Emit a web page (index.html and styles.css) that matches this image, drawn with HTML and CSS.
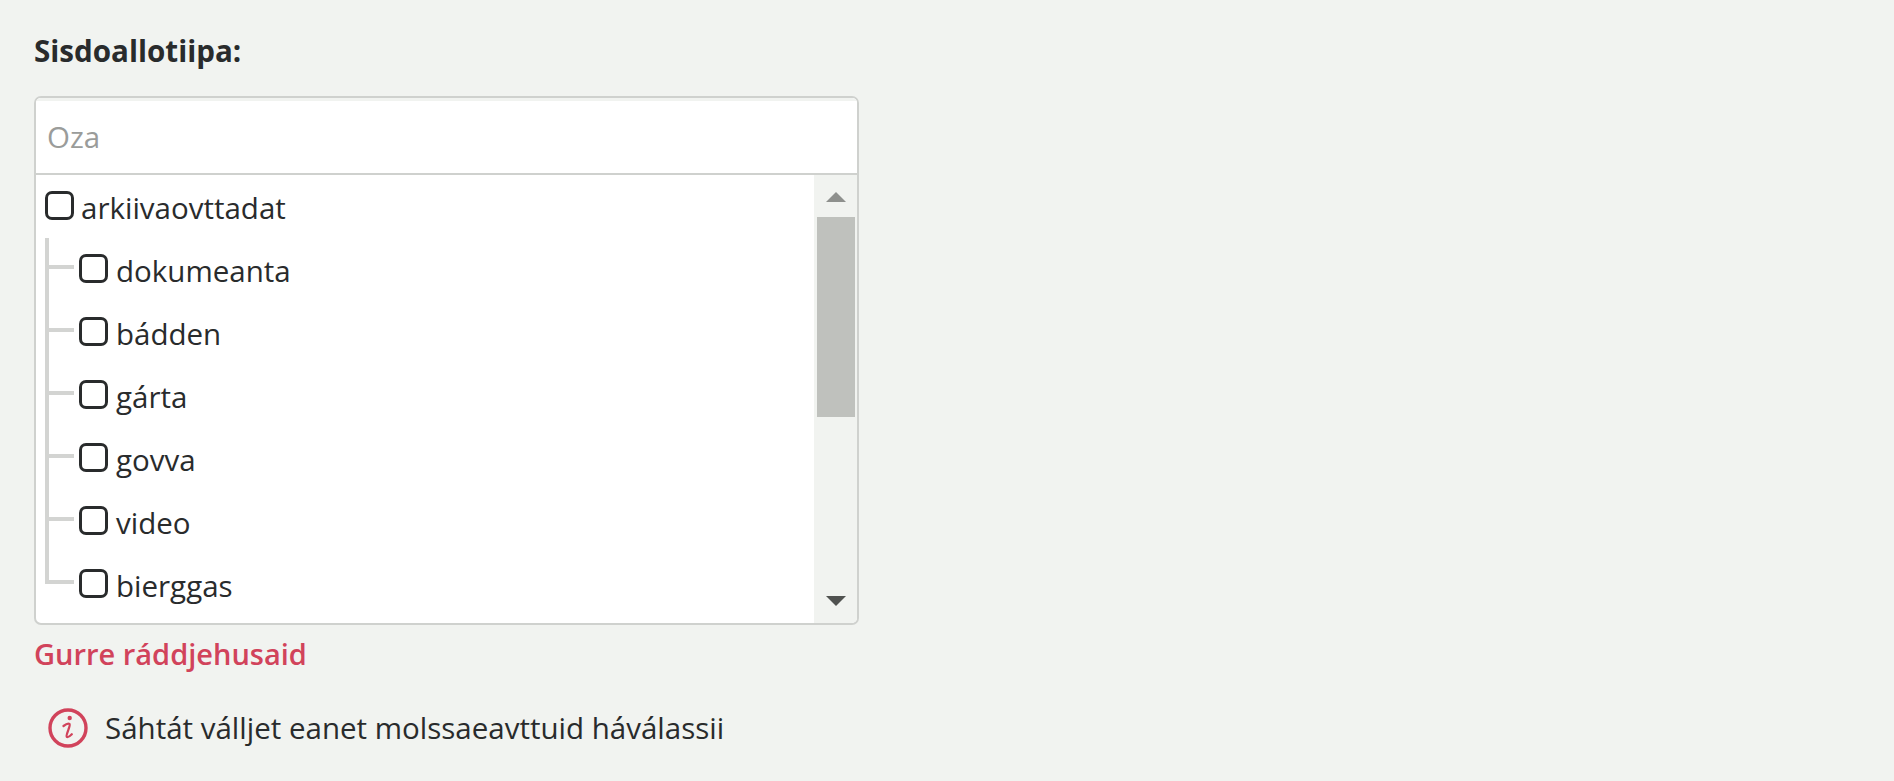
FILE: index.html
```html
<!DOCTYPE html>
<html lang="se">
<head>
<meta charset="utf-8">
<title>Sisdoallotiipa</title>
<link rel="stylesheet" href="styles.css">
</head>
<body>
<section class="field">
  <h2 class="label">Sisdoallotiipa:</h2>
  <div class="box">
    <input class="search" type="text" placeholder="Oza">
    <div class="tree-wrap">
      <div class="tree">
        <label class="node root"><input class="check" type="checkbox"><span>arkiivaovttadat</span></label>
        <ul class="children">
          <li class="child"><i class="stem"></i><label class="node"><input class="check" type="checkbox"><span>dokumeanta</span></label></li>
          <li class="child"><i class="stem"></i><label class="node"><input class="check" type="checkbox"><span>bádden</span></label></li>
          <li class="child"><i class="stem"></i><label class="node"><input class="check" type="checkbox"><span>gárta</span></label></li>
          <li class="child"><i class="stem"></i><label class="node"><input class="check" type="checkbox"><span>govva</span></label></li>
          <li class="child"><i class="stem"></i><label class="node"><input class="check" type="checkbox"><span>video</span></label></li>
          <li class="child"><i class="stem"></i><label class="node"><input class="check" type="checkbox"><span>bierggas</span></label></li>
        </ul>
      </div>
      <div class="scrollbar">
        <i class="arrow up"></i>
        <div class="track"><div class="thumb"></div></div>
        <i class="arrow down"></i>
      </div>
    </div>
  </div>
  <div class="error">Gurre ráddjehusaid</div>
  <div class="hint">
    <svg class="info" viewBox="0 0 40 40" aria-hidden="true">
      <circle cx="20" cy="20" r="18" fill="none" stroke="#d1435b" stroke-width="3.4"/>
      <circle cx="21.700" cy="10" r="2.200" fill="#d1435b"/>
      <path d="M15.500 18c2-1.500 5-2.600 6-2 .8.500.1 2.200-1 5.500-1.100 3.200-2.600 6.500-1.700 7.300.9.700 3-.6 5-2.600" fill="none" stroke="#d1435b" stroke-width="2.300" stroke-linecap="round"/>
    </svg>
    <span>Sáhtát válljet eanet molssaeavttuid háválassii</span>
  </div>
</section>
</body>
</html>
```
FILE: styles.css
```css
* { box-sizing: border-box; }
html, body { margin: 0; height: 100%; }
body {
  background: #f1f3f0;
  color: #292b2c;
  font-family: "Open Sans", "Noto Sans", sans-serif;
  font-size: 29.5px;
  overflow: hidden;
}
.field { width: 825px; margin-left: 34px; padding-top: 34px; }
.label { margin: 0 0 29px; font-size: 29.6px; line-height: 33px; font-weight: 700; }
.box {
  border: 2px solid #cfd1ce;
  border-radius: 7px;
  height: 529px;
  overflow: hidden;
  display: flex;
  flex-direction: column;
  background: #fff;
}
.search {
  display: block;
  width: 100%;
  height: 77px;
  flex: none;
  border: 0;
  border-bottom: 2px solid #cfd1ce;
  box-shadow: inset 0 3px 0 #f1f3f0;
  padding: 1px 11px 0;
  font: inherit;
  color: #292b2c;
  outline: none;
  background: #fff;
}
.search::placeholder { color: #9a9c9a; opacity: 1; }
.tree-wrap { flex: 1; display: flex; min-height: 0; }
.tree { flex: 1; min-width: 0; overflow: hidden; padding-left: 9px; }
.node { display: flex; align-items: center; gap: 7px; height: 63px; }
.node span { padding-top: 2px; }
.child .node { gap: 8px; }
.check {
  appearance: none;
  -webkit-appearance: none;
  width: 29px;
  height: 29px;
  margin: -3px 0 0;
  flex: none;
  border: 3px solid #292b2c;
  border-radius: 7px;
  background: #fff;
}
.children { list-style: none; margin: 0; padding: 0; }
.child { display: flex; height: 63px; }
.stem {
  display: block;
  flex: none;
  width: 34px;
  height: 100%;
  border-left: 4px solid #d3d4d2;
  background: linear-gradient(#d3d4d2, #d3d4d2) no-repeat 0 27px / 25px 4px;
}
.child:last-child .stem { height: 31px; }
.scrollbar {
  flex: none;
  width: 43px;
  background: #f1f3f0;
  display: flex;
  flex-direction: column;
  align-items: center;
  padding: 17px 0;
}
.arrow { display: block; width: 0; height: 0; border-left: 10px solid transparent; border-right: 10px solid transparent; flex: none; }
.arrow.up { border-bottom: 10px solid #8e908d; }
.arrow.down { border-top: 10px solid #505250; }
.track { flex: 1; width: 38px; padding-top: 15px; }
.thumb { height: 200px; background: #bfc1bd; }
.error { margin-top: 12px; font-size: 29px; line-height: 34px; font-weight: 600; color: #d1435b; }
.hint { display: flex; align-items: center; gap: 17px; margin: 36px 0 0 14px; }
.info { width: 40px; height: 40px; flex: none; }
```
